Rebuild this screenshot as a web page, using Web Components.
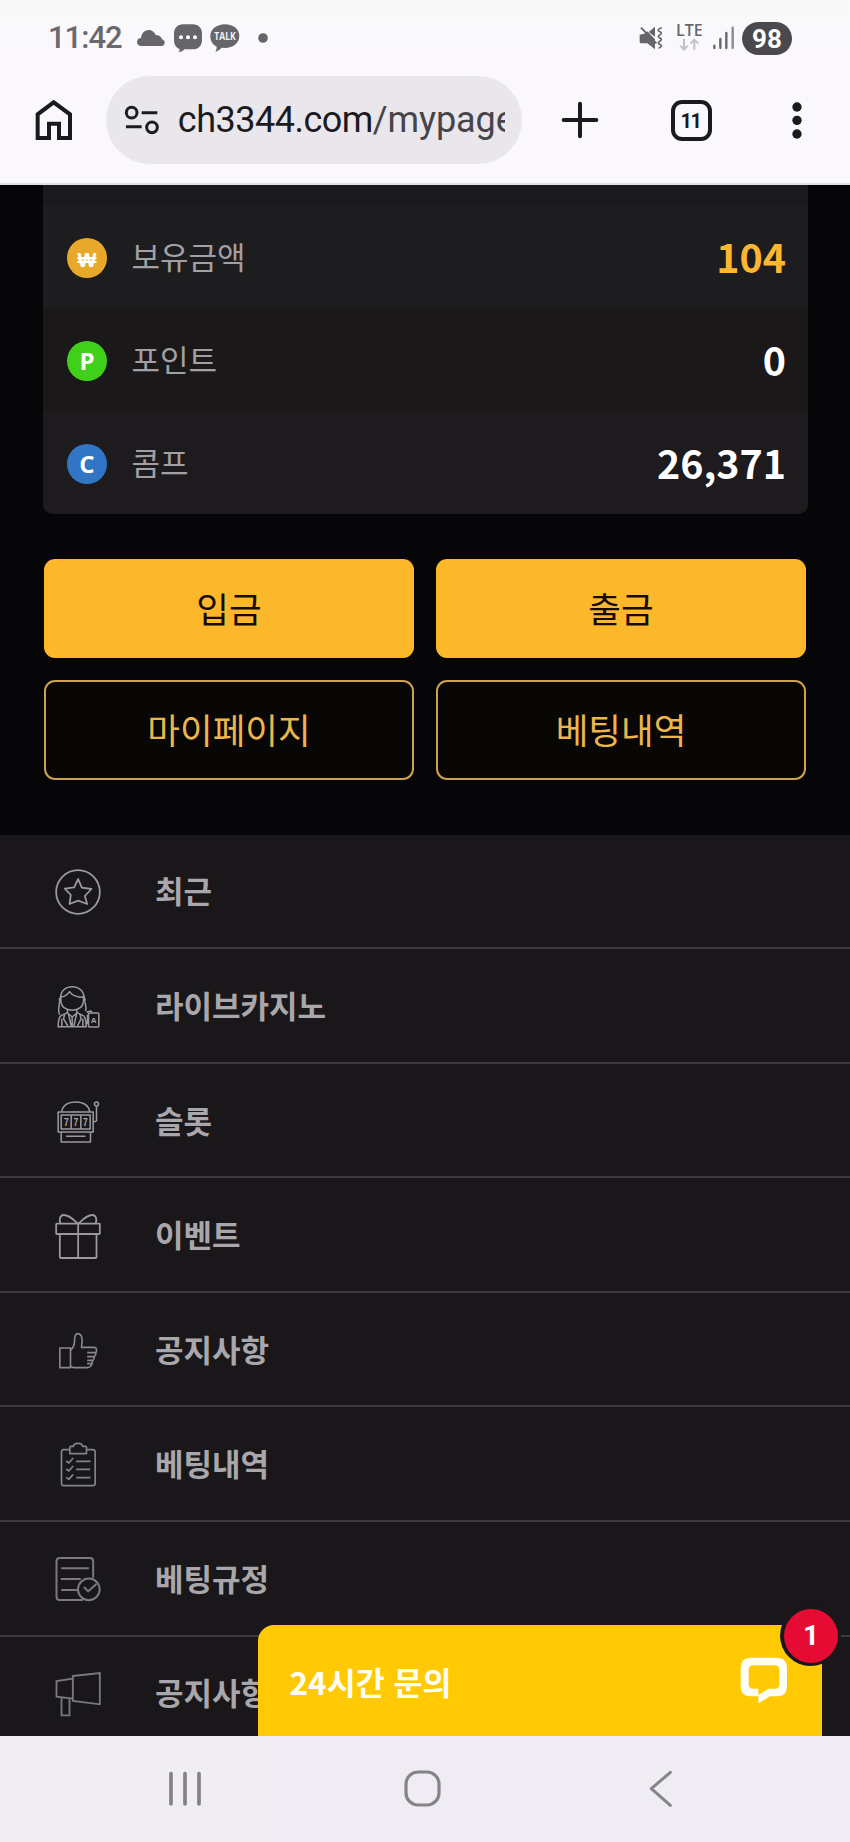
<!DOCTYPE html>
<html lang="ko">
<head>
<meta charset="utf-8">
<title>마이페이지</title>
<style>
html,body{margin:0;padding:0;background:#060507}
body{width:850px;height:1842px;overflow:hidden;font-family:"Noto Sans CJK KR","Noto Sans",sans-serif}
</style>
</head>
<body>
<phone-screen></phone-screen>
<script>
const define = (name, html) => {
  const t = document.createElement('template');
  t.innerHTML = html;
  customElements.define(name, class extends HTMLElement {
    constructor() {
      super();
      this.attachShadow({mode: 'open'}).appendChild(t.content.cloneNode(true));
    }
  });
};

/* name: [width, height, viewBox, markup] */
const ICONS = {
  cloud: [28, 16, '411 87 84 48', '<path fill="#676569" d="M424 135c-8 0-13-5-13-12s5-12 12-12c1-13 10-24 23-24 10 0 18 6 21 15 10 0 17 5 19 13 5 1 8 5 8 10 0 6-4 10-10 10z"/>'],
  chat: [28, 28, '521 71 84 84', '<path fill="#676569" d="M549 72h28c18 0 28 12 28 28v18c0 18-11 29-28 29h-24c-5 4-10 8-18 9 2-3 3-7 3-10-11-4-17-14-17-28v-18c0-16 10-28 28-28z"/><g fill="#fff"><circle cx="542" cy="111" r="6"/><circle cx="563" cy="111" r="6"/><circle cx="584" cy="111" r="6"/></g>'],
  talk: [30, 28, '629 71 90 84', '<path fill="#676569" d="M674 72c25 0 43 15 43 35s-18 36-43 36l-10-1c-5 5-10 9-19 13 3-5 4-10 4-16-12-6-19-17-19-32 0-20 19-35 44-35z"/><text x="674" y="119" font-family="Open Sans" font-weight="700" font-size="29" textLength="64" lengthAdjust="spacingAndGlyphs" text-anchor="middle" fill="#f4f2f6">TALK</text>'],
  dot: [10, 10, '0 0 10 10', '<circle cx="5" cy="5" r="4.8" fill="#676569"/>'],
  mute: [25, 24, '643 76 75 72', '<path fill="#676569" d="M645 102l14-3 9-7 23 24v30l-23-18h-17c-4 0-6-2-6-5zM672 94l19-16v30z"/><path d="M649 81l46 47" stroke="#676569" stroke-width="6"/><path d="M711 81c-5 2-12 5-10 9 1 4 10 3 9 8s-10 5-9 10 10 4 9 9-10 5-9 10 10 4 9 9-8 3-6 8" fill="none" stroke="#676569" stroke-width="5"/>'],
  lte: [27, 28, '752 74 81 84', '<text x="752" y="110" font-family="Open Sans" font-weight="600" font-size="47" textLength="80" lengthAdjust="spacingAndGlyphs" fill="#676569">LTE</text><path d="M776 119v31m-11-11l11 12 11-12M807 151v-31m-12 13l12-12 12 12" fill="none" stroke="#c3c1c4" stroke-width="6"/>'],
  signal: [23, 24, '859 77 69 72', '<g stroke="#676569" stroke-width="7" stroke-linecap="round"><path d="M866 136v7M884 116v27M902 98v45"/><path d="M921 82v61" stroke="#8b898d"/></g>'],
  home: [38, 42, '104 299 114 126', '<path d="M112 416v-71l48-36 49 36v71h-33v-43h-30v43z" fill="none" stroke="#1b1a1f" stroke-width="12" stroke-linejoin="miter"/>'],
  tune: [36, 30, '372 317 108 90', '<g fill="none" stroke="#1d1c21" stroke-width="9"><circle cx="395" cy="340" r="16"/><circle cx="456" cy="384" r="16"/><path d="M425 340h47M378 382h47"/></g>'],
  plus: [38, 38, '408 304 114 114', '<path d="M465 312v98M416 361h98" stroke="#1b1a1f" stroke-width="12" stroke-linecap="round"/>'],
  dots: [12, 38, '1097 303 36 114', '<g fill="#1b1a1f"><circle cx="1115" cy="321" r="14"/><circle cx="1115" cy="361" r="14"/><circle cx="1115" cy="402" r="14"/></g>'],
  star: [50, 50, '157.5 83 150 150', '<circle cx="232.500" cy="158" r="65.500"/><path d="M233 119l11 26 29 4-20 21 7 24-27-10-26 10 4-27-18-19 28-4z"/>'],
  dealer: [50, 50, '157.5 428 150 150', '<g stroke-width="4.600"><path d="M180 477c0-20 13-35 35-35s36 15 36 35M180 473c10 0 20-5 27-16 8 12 22 17 43 17"/><path d="M181 469v18c2 15 15 25 34 26 20-1 32-11 34-26v-19M180 475c-5 2-5 12 2 13M250 475c6 2 5 12-2 13"/><path d="M177 487c0 14-7 30 1 39M254 488c0 10 5 17 1 27M201 511v10l14 12 14-12v-10M201 520l-18 8c-8 4-10 20-10 34h84c0-14-1-30-10-34l-18-8M193 524l-4 14 13 22M238 524l4 14-11 22M184 538v23M247 538v23M215 533v29M204 524l8 36M228 524l-8 36M258 519l13-4 4 5M261 526v28"/><rect x="264" y="521" width="31" height="42" rx="3"/></g><text x="279.500" y="551" text-anchor="middle" font-family="Liberation Sans" font-weight="700" font-size="24" fill="#aaa8ac" stroke="none">A</text>'],
  slot: [50, 50, '157.5 772 150 150', '<g stroke-width="4.600"><path d="M183 816c4-19 20-29 42-29s39 10 43 29"/><rect x="173" y="817" width="105" height="60"/><rect x="182" y="826" width="87" height="42"/><path d="M212 826v42M241 826v42M182 878v29h88v-29M197 890h58M220 816h4m6 0h4"/><circle cx="288" cy="793" r="6"/><path d="M288 800v42q0 4-8 4"/></g><g font-family="Liberation Sans" font-weight="700" font-size="31" fill="#aaa8ac" stroke="none" text-anchor="middle"><text x="197.500" y="858" textLength="14" lengthAdjust="spacingAndGlyphs">7</text><text x="226" y="858" textLength="14" lengthAdjust="spacingAndGlyphs">7</text><text x="254.500" y="858" textLength="14" lengthAdjust="spacingAndGlyphs">7</text></g>'],
  gift: [50, 50, '157.5 122 150 150', '<g><rect x="167" y="160" width="131" height="31" rx="2"/><path d="M178 192v68q0 3 3 3h104q3 0 3-3v-68M233 160v102M232 160c-11-10-25-26-42-26-14 0-15 22-8 26M234 160c10-9 24-26 41-26 14 0 15 20 9 25"/></g>'],
  thumb: [50, 50, '157.5 467 150 150', '<g stroke="#8a888c" stroke-width="4.800"><rect x="178" y="533" width="32" height="59"/><path d="M211 539c7-6 10-14 11-24 0-12 3-25 9-25 9 0 14 8 14 21l-2 20h37c9 0 10 8 6 17 1 6-2 9-5 11 1 6-1 10-5 13 0 12-7 20-15 20h-41c-4 0-7-2-10-5M260 547h26M260 559h24M260 570h17M260 580h15"/></g>'],
  clip: [50, 50, '157.5 811 150 150', '<g stroke="#858387" stroke-width="5"><path d="M206 840h-17q-6 0-6 8v92q0 8 6 8h88q7 0 7-8v-92q0-8-7-8h-17"/><path d="M208 852v-19q0-3 3-3h8c0-12 27-12 27 0h9q3 0 3 3v19z"/><path d="M197 874l8 6 13-15M197 898l8 6 13-15M197 923l8 6 13-15M227 875h43M227 899h42M227 924h43"/></g>'],
  rules: [50, 50, '157.5 195 150 150', '<g stroke="#7b797d" stroke-width="6"><path d="M248 330h-70q-10 0-10-10V214q0-10 10-10h90q10 0 10 10v49M182 235h83M181 267h60M182 300h49"/><circle cx="265" cy="298" r="32.500"/><path d="M250 291l13 13 25-22"/></g>'],
  horn: [50, 50, '157.5 537 150 150', '<g stroke="#7b797d" stroke-width="5.500" stroke-linejoin="miter"><path d="M217 558l81-9v94l-81-10zM217 566l-49 7v47l49 6M183 622v54h24v-51"/></g>'],
  bubble: [48, 48, '943 205 144 144', '<path fill="#fffef6" fill-rule="evenodd" d="M975 207h79q30 0 30 30v56q0 30-30 30h-21l-35 21v-21h-23q-30 0-30-30v-56q0-30 30-30zM983 230q-14 0-14 14v42q0 14 14 14h15v19l31-19h18q14 0 14-14v-42q0-14-14-14z"/>'],
  recents: [34, 36, '502 842 102 108', '<path d="M511 850v91M553 850v91M595 850v91" stroke="#838186" stroke-width="11" stroke-linecap="round"/>'],
  square: [38, 38, '0 0 38 38', '<rect x="3" y="2" width="33" height="33" rx="12" fill="none" stroke="#86848a" stroke-width="3.200"/>'],
  back: [24, 38, '670 539 72 114', '<path d="M734 546l-57 49 57 50" fill="none" stroke="#86848a" stroke-width="9" stroke-linecap="round" stroke-linejoin="round"/>'],
};

customElements.define('line-icon', class extends HTMLElement {
  constructor() { super(); this.attachShadow({mode: 'open'}); }
  connectedCallback() {
    const [w, h, box, body] = ICONS[this.getAttribute('name')];
    this.shadowRoot.innerHTML = `<style>:host{display:block;flex:none;width:${w}px;height:${h}px}svg{display:block;overflow:visible}</style>
      <svg width="${w}" height="${h}" viewBox="${box}" fill="none" stroke-linejoin="round">${body}</svg>`;
    if (w === 50) {
      const svg = this.shadowRoot.querySelector('svg');
      svg.setAttribute('stroke', '#9b999d');
      svg.setAttribute('stroke-width', '5.300');
    }
  }
});

define('status-bar', `<style>
:host{display:flex;height:76px;box-sizing:border-box;align-items:center;padding:0 58px 0 48px;justify-content:space-between;background:linear-gradient(#f9f9f9,#faf8fc 60%)}
.l,.r{display:flex;align-items:center}
.t{font:500 31px/36px Roboto,sans-serif;color:#6b696d;width:75px;letter-spacing:-1px;margin-right:14px}
.bat{width:50px;height:33px;border-radius:17px;background:#4b494d;color:#fff;font:700 26px/34px Roboto,sans-serif;text-align:center}
</style>
<div class="l"><span class="t">11:42</span><line-icon name="cloud" style="margin-right:9px"></line-icon><line-icon name="chat" style="margin-right:8px"></line-icon><line-icon name="talk" style="margin-right:18px"></line-icon><line-icon name="dot"></line-icon></div>
<div class="r"><line-icon name="mute" style="margin-right:12px"></line-icon><line-icon name="lte" style="margin-right:9px"></line-icon><line-icon name="signal" style="margin-right:7px"></line-icon><span class="bat">98</span></div>`);

define('browser-bar', `<style>
:host{display:flex;height:109px;box-sizing:border-box;padding:0 0 19px 34.700px;align-items:center;background:#faf8fd;border-bottom:2px solid #e1dfe6}
.pill{flex:none;width:416px;height:88px;border-radius:44px;margin-left:33.600px;background:#e9e7ec;display:flex;align-items:center;box-sizing:border-box;padding-left:18px}
.url{width:327px;margin-left:17.500px;overflow:hidden;white-space:nowrap;font:400 36px/50px Roboto,sans-serif;color:#46444a;letter-spacing:-.1px}
.url b{font-weight:400;color:#1b1a1f;letter-spacing:-.5px}
.tab{flex:none;width:41px;height:41px;box-sizing:border-box;border:4px solid #1b1a1f;border-radius:11px;font:700 20px/34px Roboto,sans-serif;letter-spacing:-1.500px;text-indent:-1.500px;text-align:center;color:#1b1a1f;margin:0 79px 0 71.400px}
</style>
<line-icon name="home"></line-icon>
<div class="pill"><line-icon name="tune"></line-icon><div class="url"><b>ch3344.com</b>/mypage</div></div>
<line-icon name="plus" style="margin-left:39px"></line-icon><div class="tab">11</div><line-icon name="dots"></line-icon>`);

define('balance-row', `<style>
:host{display:flex;align-items:center;height:103.400px;box-sizing:border-box;padding:0 22px 0 24px;background:var(--row,#1d1c1f)}
.coin{width:40px;height:40px;margin-top:4px;border-radius:50%;background:var(--coin);color:#fff;font:700 24px/40px "Open Sans",sans-serif;text-align:center}
.name{margin-left:24.500px;flex:1;font-size:31px;line-height:40px;color:#a2a0a4;font-weight:400}
.val{font-size:39.400px;line-height:50px;font-weight:700;color:var(--val,#fff)}
</style><div class="coin"><slot name="coin"></slot></div><div class="name"><slot></slot></div><div class="val"><slot name="value"></slot></div>`);

define('action-button', `<style>
:host{display:block;box-sizing:border-box;height:99px;border-radius:11px;text-align:center;font-size:35.500px;line-height:97px;background:#fdb72a;color:#150b04;font-weight:400}
:host([outline]){height:100px;line-height:94px;background:#080705;border:2px solid #cfa050;color:#ecb64c}
</style><slot></slot>`);

define('menu-row', `<style>
:host{display:flex;box-sizing:border-box;height:114.560px;padding:3px 0 0 52.500px;align-items:center;border-bottom:2px solid #3d3b3f;background:#19171a}
span{margin:-4px 0 0 52.500px;font-size:31px;line-height:44px;font-weight:700;color:#a9a7ab}
</style><line-icon></line-icon><span><slot></slot></span>`);

define('chat-widget', `<style>
:host{position:absolute;left:257.500px;bottom:0;width:564px;height:111px;box-sizing:border-box;background:#ffca04;border-radius:16px 0 0 0;display:flex;align-items:center;justify-content:space-between;padding:0 34px 0 32px}
.t{font-size:31.500px;line-height:44px;font-weight:700;color:#fffef6}
.b{position:absolute;left:522.500px;top:-20px;width:61px;height:61px;border-radius:50%;background:#19171a}
.n{position:absolute;left:4px;top:4px;width:54px;height:54px;border-radius:50%;background:#e60b33;color:#fff;font:700 28px/53px Roboto,sans-serif;text-align:center}
</style><div class="t"><slot></slot></div><line-icon name="bubble"></line-icon><div class="b"><div class="n">1</div></div>`);

define('nav-bar', `<style>
:host{display:flex;height:106px;box-sizing:border-box;align-items:center;padding:0 0 1px 167.500px;background:linear-gradient(90deg,#f0eef1 30%,#efedf3 31%)}
</style><line-icon name="recents"></line-icon><line-icon name="square" style="margin-left:201px"></line-icon><line-icon name="back" style="margin-left:208px"></line-icon>`);

const rows = [['star','최근'],['dealer','라이브카지노'],['slot','슬롯'],['gift','이벤트'],['thumb','공지사항'],['clip','베팅내역'],['rules','베팅규정'],['horn','공지사항']];
customElements.define('menu-list', class extends HTMLElement {
  constructor() {
    super();
    const root = this.attachShadow({mode: 'open'});
    root.innerHTML = '<style>:host{display:block}</style>';
    for (const [icon, label] of rows) {
      const row = document.createElement('menu-row');
      row.textContent = label;
      row.shadowRoot.querySelector('line-icon').setAttribute('name', icon);
      root.appendChild(row);
    }
  }
});

define('phone-screen', `<style>
:host{display:flex;flex-direction:column;width:850px;height:1842px}
main{position:relative;flex:1;min-height:0;overflow:hidden;background:#060507}
.card{margin:0 42px 0 43px;border-radius:0 0 10px 10px;overflow:hidden;background:#1a191c;padding-top:19px}
.acts{display:grid;grid-template-columns:370px 370px;column-gap:22px;row-gap:22px;margin:45px 0 54.500px 44px}
.won{font-size:20px}
</style>
<status-bar></status-bar>
<browser-bar></browser-bar>
<main>
<div class="card">
<balance-row style="--coin:#e8a92b;--val:#fdb72f;--row:#1d1c1f"><span slot="coin" class="won">₩</span>보유금액<span slot="value">104</span></balance-row>
<balance-row style="--coin:#40d01a;--row:#1b181a"><span slot="coin">P</span>포인트<span slot="value">0</span></balance-row>
<balance-row style="--coin:#3176c4;--row:#1d1b1d"><span slot="coin">C</span>콤프<span slot="value">26,371</span></balance-row>
</div>
<div class="acts"><action-button>입금</action-button><action-button>출금</action-button><action-button outline>마이페이지</action-button><action-button outline>베팅내역</action-button></div>
<menu-list></menu-list>
<chat-widget>24시간 문의</chat-widget>
</main>
<nav-bar></nav-bar>`);
</script>
</body>
</html>
